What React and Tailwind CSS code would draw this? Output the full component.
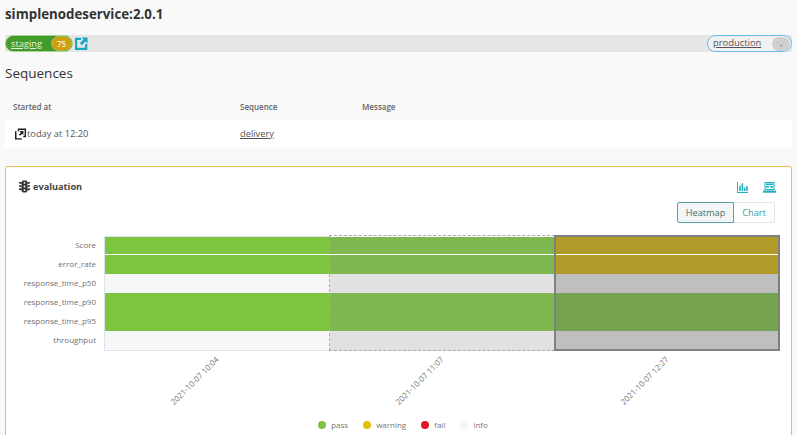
import React from 'react';

const rows = [
  { label: 'Score', h: 'h-[17px]', mb: 'mb-px', cells: ['bg-[#7dc540]', 'bg-[#7fb84e]', 'bg-[#b39b2a]'] },
  { label: 'error_rate', h: 'h-[19px]', mb: '', cells: ['bg-[#7dc540]', 'bg-[#7fb84e]', 'bg-[#b39b2a]'] },
  { label: 'response_time_p50', h: 'h-[19px]', mb: '', cells: ['bg-[#f7f7f7]', 'bg-[#e1e1e1]', 'bg-[#bfbfbf]'] },
  { label: 'response_time_p90', h: 'h-[19px]', mb: '', cells: ['bg-[#7dc540]', 'bg-[#7fb84e]', 'bg-[#75a24e]'] },
  { label: 'response_time_p95', h: 'h-[19px]', mb: '', cells: ['bg-[#7dc540]', 'bg-[#7fb84e]', 'bg-[#75a24e]'] },
  { label: 'throughput', h: 'h-[19px]', mb: '', cells: ['bg-[#f7f7f7]', 'bg-[#e1e1e1]', 'bg-[#bfbfbf]'] },
];

const times = ['2021-10-07 10:04', '2021-10-07 11:07', '2021-10-07 12:27'];

const legend = [
  { name: 'pass', color: 'bg-[#7dc540]' },
  { name: 'warning', color: 'bg-[#e6be00]' },
  { name: 'fail', color: 'bg-[#dc172a]' },
  { name: 'info', color: 'bg-[#f5f5f5]' },
];

function ExternalIcon({ className }) {
  return (
    <svg viewBox="0 0 14 14" className={className} fill="none" stroke="currentColor">
      <path d="M6.5 2H1.2v10.8H12V7.5" strokeWidth="2.4" />
      <path d="M7 0.5h6.5V7L11.2 4.8 7.2 8.8 5.2 6.8 9.2 2.8z" fill="currentColor" stroke="none" />
    </svg>
  );
}

function SequenceIcon() {
  return (
    <svg viewBox="0 0 12 12" className="w-[11px] h-[12px] mr-px text-[#1c1c1c]" fill="currentColor">
      <path d="M3 0h9v9.5H9V8h1.5V1.5h-6V3H3z" />
      <path d="M0 3h1.6v7.5H7.5V12H0z" />
      <path d="M5 2.8h4.2V7L7.8 5.7 5.6 7.9 4.3 6.6l2.2-2.2z" />
    </svg>
  );
}

function TrafficLight() {
  return (
    <svg viewBox="0 0 12 14" className="w-[11px] h-[13px] text-[#333]" fill="currentColor">
      <rect x="3" y="0.5" width="6" height="13" rx="1.5" />
      <path d="M0 2h3v2.5L0 3.5zM12 2H9v2.5l3-1zM0 5.5h3V8L0 7zM12 5.5H9V8l3-1zM0 9h3v2.5L0 10.5zM12 9H9v2.5l3-1z" />
      <circle cx="6" cy="3" r="1" fill="#fff" />
      <circle cx="6" cy="7" r="1" fill="#fff" />
      <circle cx="6" cy="11" r="1" fill="#fff" />
    </svg>
  );
}

function BarChartIcon() {
  return (
    <svg viewBox="0 0 12 12" className="w-[11px] h-[11px] text-[#1fb0c2]" fill="currentColor">
      <path d="M0 0h1v11h11v1H0z" />
      <rect x="2.5" y="4" width="1.7" height="6" />
      <rect x="5" y="1.5" width="1.7" height="8.5" />
      <rect x="7.5" y="6" width="1.7" height="4" />
      <rect x="10" y="4.5" width="1.7" height="5.5" />
    </svg>
  );
}

function LaptopIcon() {
  return (
    <svg viewBox="0 0 13 11" className="w-[13px] h-[11px] text-[#1fb0c2]" fill="currentColor">
      <path d="M1.5 0h10v8h-10zM2.5 1v6h8V1z" fillRule="evenodd" />
      <rect x="3" y="1.5" width="7" height="1.6" />
      <rect x="3" y="4" width="3" height="1.6" />
      <rect x="7" y="4" width="3" height="1.6" />
      <path d="M0 8.6h13V10a.7.7 0 0 1-.7.7H.7A.7.7 0 0 1 0 10z" />
    </svg>
  );
}

function Heatmap() {
  return (
    <div className="flex mt-[13px]">
      {/* Y axis names */}
      <div className="w-[77px] mr-[8px] shrink-0 flex flex-col text-right text-[8px] text-[#707070]">
        {rows.map((r) => (
          <div key={r.label} className={`${r.h} ${r.mb} flex items-center justify-end whitespace-nowrap`}>{r.label}</div>
        ))}
      </div>
      <div className="relative w-[675px] shrink-0 border-l border-b border-[#dbe3f0] pt-px">
        <div className="absolute left-0 top-0 w-[225px] border-t border-[#e3e3e3]" />
        {rows.map((r) => (
          <div key={r.label} className={`flex ${r.h} ${r.mb}`}>
            {r.cells.map((c, i) => (
              <div key={i} className={`flex-1 ${c}`} />
            ))}
          </div>
        ))}
        {/* Compared and selected columns */}
        <div className="absolute left-[224px] w-[226px] -top-px -bottom-px border border-dashed border-[#aaa]" />
        <div className="absolute left-[449px] w-[226px] -top-px -bottom-px border-2 border-[#808080]" />
        {times.map((t, i) => (
          <span
            key={t}
            className={`absolute top-[117px] text-[8px] leading-[10px] text-[#777] whitespace-nowrap origin-right -rotate-45 ${['right-[562px]', 'right-[337px]', 'right-[112px]'][i]}`}
          >
            {t}
          </span>
        ))}
      </div>
    </div>
  );
}

export default function App() {
  return (
    <div
      className="w-[797px] h-[435px] overflow-hidden bg-[#f9f9f9] text-[#444] px-[5px]"
      style={{ fontFamily: '"Open Sans", sans-serif' }}
    >
      <h1 className="text-[13.3px] leading-[20px] font-bold text-[#333] pt-[4px] h-[35px]">simplenodeservice:2.0.1</h1>

      {/* Stage bar */}
      <div className="h-[17px] bg-[#e6e6e6] flex items-center justify-between">
        <div className="flex items-center">
          <div className="h-[17px] w-[68px] rounded-full bg-[#429b2b] border border-[#a6d28c] flex items-center pl-[5px] justify-between">
            <span className="text-[9.3px] text-[#e8f2e0] underline">staging</span>
            <span className="h-[15px] w-[21px] rounded-full bg-[#cf9f0a] border border-[#a6c070] text-[8px] font-semibold text-[#f5efd8] flex items-center justify-center">75</span>
          </div>
          <ExternalIcon className="w-[13px] h-[13px] ml-[2px] text-[#14a8c4]" />
        </div>
        <div className="h-[17px] w-[85px] rounded-full bg-[#f2f2f2] border border-[#66bbee] flex items-center justify-between pl-[5px]">
          <span className="text-[9.4px] text-[#555] underline">production</span>
          <span className="h-[14px] w-[18px] rounded-full bg-[#cfcfcf] text-[8px] text-[#555] flex items-center justify-center mr-px">-</span>
        </div>
      </div>

      <h2 className="text-[13.5px] leading-[20px] font-normal text-[#333] mt-[11px]">Sequences</h2>

      {/* Sequences table */}
      <div className="flex items-center h-[20px] mt-[14px] mb-[3px] text-[8px] font-semibold text-[#666] px-[8px]">
        <span className="w-[227px]">Started at</span>
        <span className="w-[122px]">Sequence</span>
        <span>Message</span>
      </div>
      <div className="flex items-center h-[28px] pb-px bg-white text-[9.3px] text-[#555] px-[8px]">
        <div className="w-[227px] flex items-center">
          <div className="ml-[2px]">
            <SequenceIcon />
          </div>
          <span>today at 12:20</span>
        </div>
        <span className="underline">delivery</span>
      </div>

      {/* Evaluation card */}
      <div className="mt-[18px] h-[300px] bg-white border border-[#e3c048] rounded-[2px] px-[13px] pt-[13px] flex flex-col">
        <div className="flex items-center justify-between h-[14px]">
          <div className="flex items-center gap-[3px]">
            <TrafficLight />
            <span className="text-[9.2px] font-bold text-[#444]">evaluation</span>
          </div>
          <div className="flex items-center gap-[15px] mr-[2px]">
            <BarChartIcon />
            <LaptopIcon />
          </div>
        </div>
        <div className="flex justify-end mt-[8px] mr-[3px]">
          <div className="h-[21px] w-[57px] bg-[#f2f6f6] border border-[#5b9fa8] rounded-l-[2px] text-[9.2px] text-[#4a6a70] flex items-center justify-center">Heatmap</div>
          <div className="h-[21px] w-[41px] bg-white border border-l-0 border-[#e3e3e3] rounded-r-[2px] text-[9.2px] text-[#1aa3b5] flex items-center justify-center">Chart</div>
        </div>
        <Heatmap />
        <div className="flex justify-center gap-[15px] text-[8px] text-[#777] h-[14px] pl-[9px] mt-[67px]">
          {legend.map((l) => (
            <div key={l.name} className="flex items-center gap-[5px] h-[14px]">
              <span className={`w-[8px] h-[8px] rounded-full ${l.color}`} />
              <span>{l.name}</span>
            </div>
          ))}
        </div>
      </div>
    </div>
  );
}
